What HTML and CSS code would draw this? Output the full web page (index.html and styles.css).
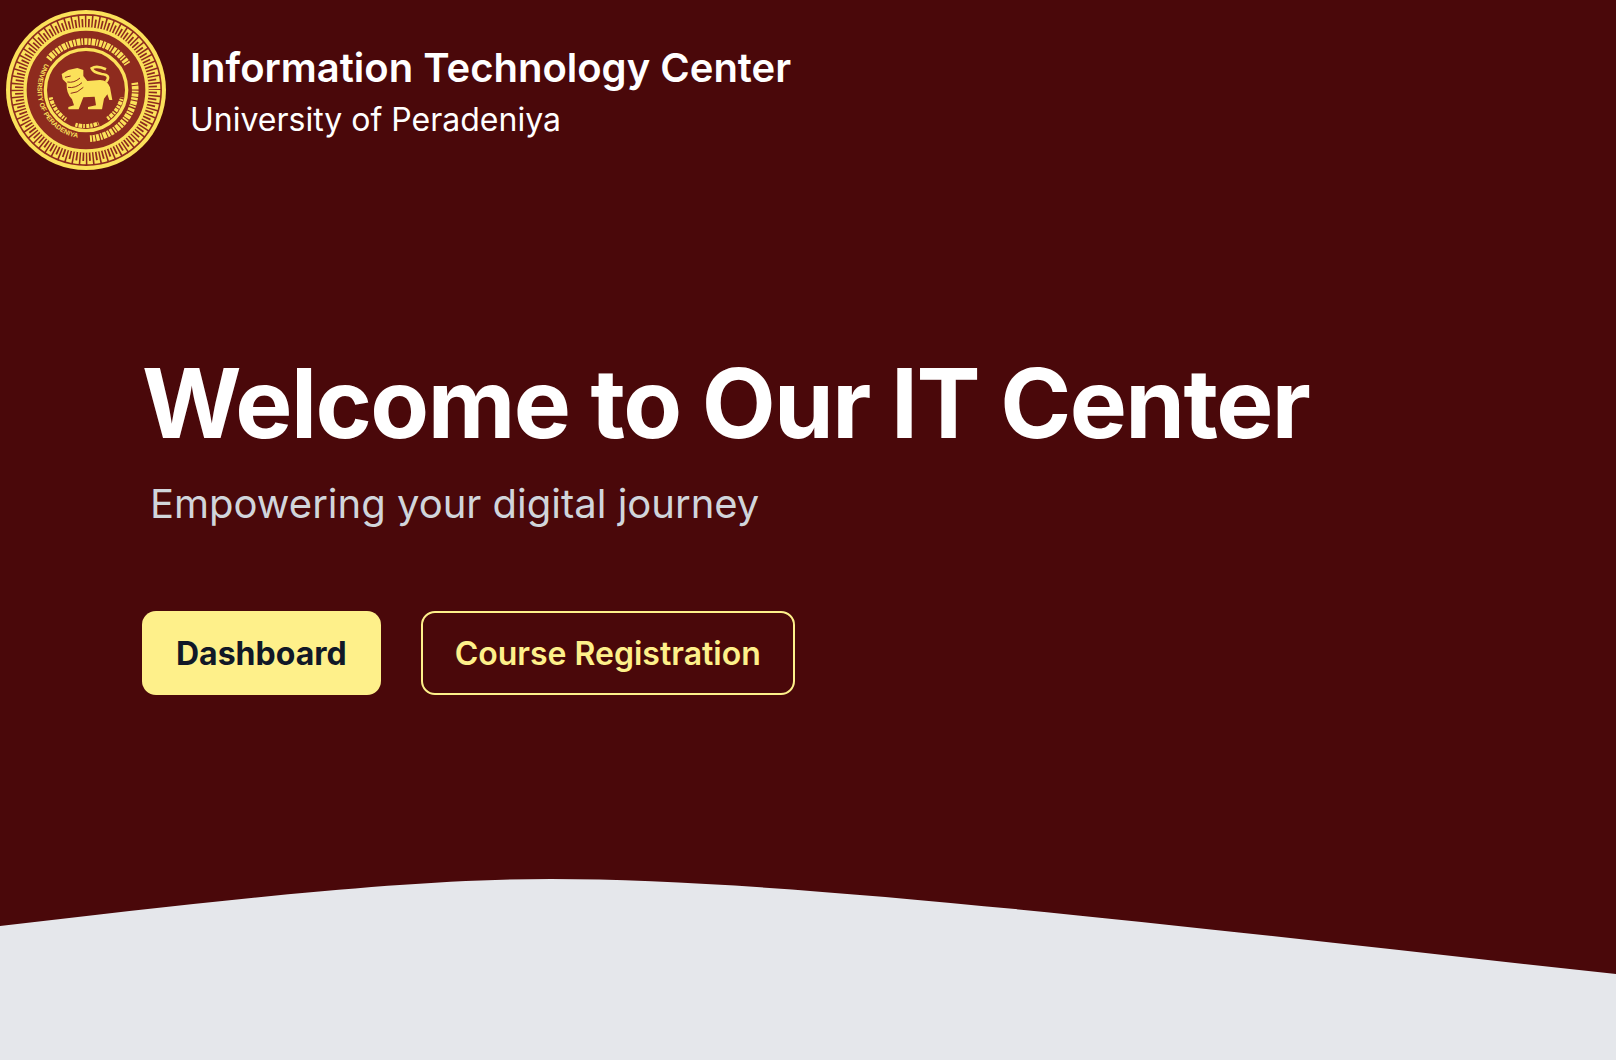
FILE: index.html
```html
<!DOCTYPE html>
<html lang="en">
<head>
<meta charset="UTF-8" />
<meta name="viewport" content="width=device-width, initial-scale=1" />
<title>Information Technology Center</title>
<link rel="stylesheet" href="styles.css">
</head>
<body>

<header class="site-header">
  <svg class="logo" viewBox="18 30 480 480" aria-hidden="true">
    <defs>
      <path id="nameArc" d="M 136 190 A 146 146 0 0 0 236 414" />
    </defs>
    <circle cx="258" cy="270" r="240" fill="#fbe15a" />
    <circle cx="258" cy="270" r="228" fill="#8e2b1e" />
    <circle cx="258" cy="270" r="205" fill="none" stroke="#fbe15a" stroke-width="36" pathLength="64" stroke-dasharray="0.78 0.22" />
    <circle cx="258" cy="270" r="200" fill="none" stroke="#8e2b1e" stroke-width="26" pathLength="64" stroke-dasharray="0.26 0.74" stroke-dashoffset="-0.26" />
    <circle cx="258" cy="270" r="183" fill="#8e2b1e" stroke="#fbe15a" stroke-width="10" />
    <circle cx="258" cy="270" r="122" fill="#8e2b1e" stroke="#fbe15a" stroke-width="10" />

    <!-- seal script, too small to read at this size -->
    <path class="seal-script" d="M 146 178 A 146 146 0 0 1 382 192" />
    <path class="seal-script" d="M 404 248 A 146 146 0 0 1 270 416" />
    <text class="seal-name"><textPath href="#nameArc">UNIVERSITY OF PERADENIYA</textPath></text>
    <path class="seal-script small" d="M 152 292 A 106 106 0 0 0 198 358" />
    <path class="seal-script small" d="M 226 374 A 106 106 0 0 0 296 370" />
    <path class="seal-script small" d="M 322 356 A 106 106 0 0 0 366 292" />

    <path class="lion" d="M185 222 L205 210 L232 204 L250 210 L250 228 L262 243 L300 240 Q322 240 330 262 L337 300 L328 300 L322 283 L312 296 L306 328 L264 328 L264 321 L288 316 L284 290 L250 292 L236 328 L205 328 L205 321 L222 316 L216 298 Q198 280 200 250 L188 238 Z" />
    <path class="lion-tail" d="M318 246 Q335 225 305 222 Q280 218 275 205 Q290 195 318 208" />
    <path class="lion-mane" d="M202 246 Q222 250 240 234 M204 262 Q226 266 246 248 M212 280 Q232 280 250 262 M195 232 L212 228" />
  </svg>
  <div class="brand">
    <div class="brand-title">Information Technology Center</div>
    <div class="brand-sub">University of Peradeniya</div>
  </div>
</header>

<main class="hero">
  <h1>Welcome to Our IT Center</h1>
  <p class="tagline">Empowering your digital journey</p>
  <div class="actions">
    <a class="btn btn-solid" href="#">Dashboard</a>
    <a class="btn btn-outline" href="#">Course Registration</a>
  </div>
</main>

<svg class="wave" viewBox="0 0 1616 181" preserveAspectRatio="none" aria-hidden="true">
  <path d="M0 47 C200 24 400 0 551 0 C800 0 1200 50 1616 95 L1616 181 L0 181 Z" />
</svg>

</body>
</html>
```

FILE: styles.css
```css
* {
  box-sizing: border-box;
}
body {
  margin: 0;
  height: 100vh;
  overflow: hidden;
  display: flex;
  flex-direction: column;
  font-family: 'Inter', sans-serif;
  background: #4a080a;
  color: #fff;
}
.site-header {
  display: flex;
  align-items: center;
  gap: 24px;
  padding: 10px 6px 0;
}
.logo {
  width: 160px;
  height: 160px;
  flex: none;
}
.seal-script {
  fill: none;
  stroke: #fbe15a;
  stroke-width: 20;
  stroke-dasharray: 7 3 11 3 5 4 9 3;
}
.seal-script.small {
  stroke-width: 12;
}
.seal-name {
  font-family: 'Liberation Sans', sans-serif;
  font-size: 20px;
  font-weight: 700;
  fill: #fbe15a;
}
.lion {
  fill: #fbe15a;
}
.lion-tail {
  fill: none;
  stroke: #fbe15a;
  stroke-width: 8;
}
.lion-mane {
  fill: none;
  stroke: #8e2b1e;
  stroke-width: 3;
}
.brand {
  padding-top: 4px;
}
.brand-title {
  font-size: 40px;
  font-weight: 600;
  line-height: 52px;
}
.brand-sub {
  margin-top: 4px;
  font-size: 32px;
  line-height: 44px;
}
.hero {
  padding: 173px 0 0 142px;
}
h1 {
  margin: 0;
  font-size: 96px;
  font-weight: 700;
  letter-spacing: -1.55px;
  line-height: 120px;
}
.tagline {
  margin: 15px 0 0 8px;
  font-size: 40px;
  line-height: 52px;
  color: #d1d5db;
}
.actions {
  display: flex;
  gap: 40px;
  margin-top: 81px;
}
.btn {
  display: flex;
  align-items: center;
  height: 84px;
  padding: 0 34px;
  border-radius: 14px;
  font-size: 32px;
  font-weight: 600;
  text-decoration: none;
}
.btn-solid {
  background: #fef08a;
  color: #111827;
  font-weight: 700;
}
.btn-outline {
  padding: 0 32px;
  border: 2px solid #fef08a;
  color: #fef08a;
}
.wave {
  display: block;
  flex: none;
  width: 100%;
  height: 181px;
  margin-top: auto;
  fill: #e5e7eb;
}
```
